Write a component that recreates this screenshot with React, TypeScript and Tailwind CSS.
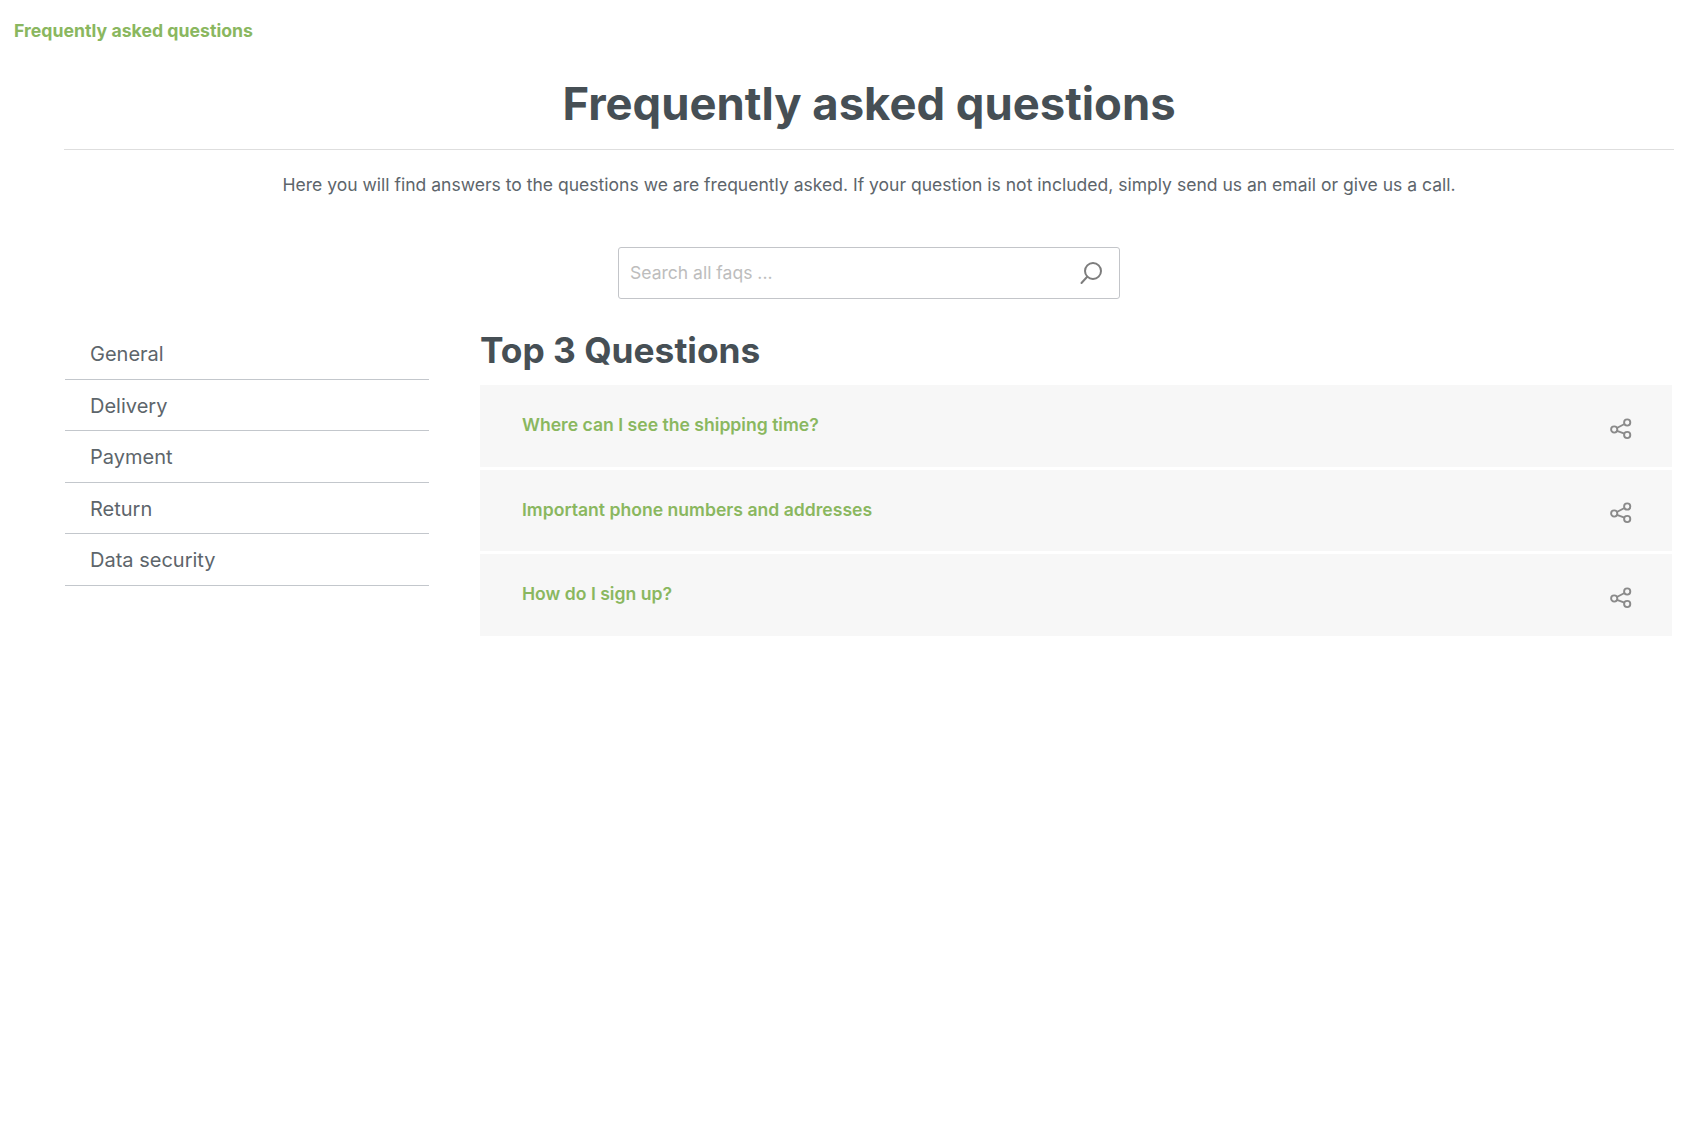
import React from "react";

const categories = ["General", "Delivery", "Payment", "Return", "Data security"];

const questions = [
  "Where can I see the shipping time?",
  "Important phone numbers and addresses",
  "How do I sign up?",
];

const ShareIcon = () => (
  <svg width="22" height="22" viewBox="0 0 22 22" fill="none" stroke="#8a8a8a" strokeWidth="1.9" className="mt-[6px] mr-[40px] shrink-0">
    <circle cx="4.2" cy="11.5" r="3.1" />
    <circle cx="17.2" cy="4.5" r="3.1" />
    <circle cx="17.2" cy="17" r="3.1" />
    <path d="M6.9 10 14.5 6M7 12.8l7.4 2.9" />
  </svg>
);

const SearchIcon = () => (
  <svg width="26" height="26" viewBox="0 0 26 26" fill="none" stroke="#7d7d7d" strokeWidth="2" strokeLinecap="round" className="shrink-0">
    <circle cx="15" cy="11" r="8" />
    <path d="M9.2 16.8 3.5 23" />
  </svg>
);

export default function App() {
  return (
    <div className="min-h-[1147px] bg-white font-['Inter',sans-serif] text-[#4a5257]">
      <div className="px-[14px] pt-[19px] text-[17.7px] leading-[24px] font-bold text-[#8ab75f]">
        Frequently asked questions
      </div>

      <div className="ml-[64px] mr-[26px]">
        <h1 className="mt-[29px] border-b border-[#dedede] pb-[14px] text-center text-[45.4px] leading-[63px] font-bold text-[#464f55]">
          Frequently asked questions
        </h1>
        <p className="mt-[23px] text-center text-[17.55px] leading-[24px] text-[#5d656b]">
          Here you will find answers to the questions we are frequently asked. If your question is not included, simply send us an email or give us a call.
        </p>

        <div className="mt-[50px] flex justify-center">
          <div className="flex h-[52px] w-[502px] items-center justify-between rounded-[3px] border border-[#c3c5c9] pr-[15px] pl-[11px]">
            <span className="text-[17.55px] text-[#bdbdbd]">Search all faqs ...</span>
            <SearchIcon />
          </div>
        </div>

        <div className="mt-[28px] flex items-start gap-[51px]">
          <ul className="mt-[1px] ml-[1px] w-[364px] shrink-0">
            {categories.map((name) => (
              <li key={name} className="flex h-[51.5px] items-center border-b border-[#c3c7cc] pt-[2px] pl-[25px] text-[20px] text-[#5d656b]">
                {name}
              </li>
            ))}
          </ul>

          <div className="min-w-0 flex-1 pr-[2px]">
            <h2 className="-mt-[1px] text-[35.3px] leading-[50px] font-bold text-[#464f55]">Top 3 Questions</h2>
            <div className="mt-[9px] flex flex-col gap-[3px]">
              {questions.map((q) => (
                <div key={q} className="flex h-[81.5px] items-center justify-between bg-[#f7f7f7] pl-[42px]">
                  <span className="-mt-[1px] text-[17.6px] font-semibold text-[#8ab75f]">{q}</span>
                  <ShareIcon />
                </div>
              ))}
            </div>
          </div>
        </div>
      </div>
    </div>
  );
}
